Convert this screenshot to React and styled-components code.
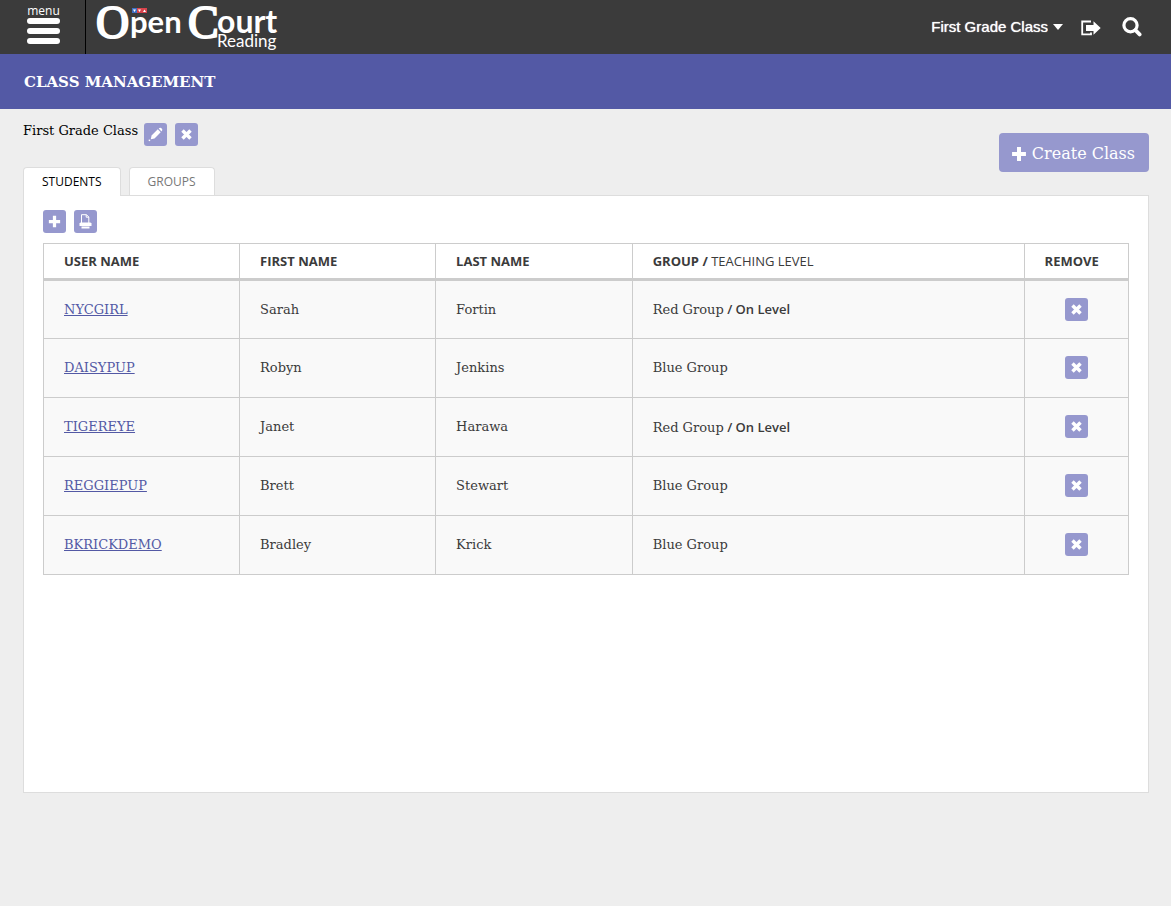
import React from "react";
import styled, { createGlobalStyle } from "styled-components";

const slab = '"DejaVu Serif", "Liberation Serif", serif';
const sans = '"Open Sans", "Noto Sans", sans-serif';

const GlobalStyle = createGlobalStyle`
  *, *::before, *::after { box-sizing: border-box; }
  body {
    margin: 0;
    background: #eeeeee;
    color: #3b3b3b;
    font-family: ${slab};
    font-size: 13px;
    line-height: 20px;
  }
  button, select { font: inherit; margin: 0; }
`;

const TopBar = styled.header`
  display: flex;
  align-items: stretch;
  height: 54px;
  background: #3b3b3b;
  color: #fff;
`;

const MenuButton = styled.button`
  display: flex;
  flex-direction: column;
  align-items: center;
  width: 86px;
  padding: 4px 0 0 2px;
  border: 0;
  border-right: 1px solid #000;
  background: none;
  color: #fff;
  font-family: ${sans};
  font-size: 12px;
  line-height: 14px;
`;

const LogoLink = styled.a`
  display: block;
  margin-left: 8px;
  height: 54px;
`;

const BarTools = styled.div`
  display: flex;
  align-items: center;
  gap: 18px;
  margin-left: auto;
  padding-right: 29px;
`;

const ClassPicker = styled.label`
  display: flex;
  align-items: center;
`;

const ClassSelect = styled.select`
  appearance: none;
  field-sizing: content;
  padding: 0 15px 0 0;
  margin-right: -10px;
  border: 0;
  background: none;
  color: #fff;
  font-family: "Liberation Sans", Arial, sans-serif;
  font-size: 15px;
  line-height: 20px;
  text-shadow: 0 0 1px #fff;
`;

const Caret = styled.svg`
  pointer-events: none;
`;

const PlainButton = styled.button`
  display: flex;
  padding: 0;
  border: 0;
  background: none;
  color: #fff;
`;

const SignOutButton = styled(PlainButton)`
  padding-top: 2px;
  margin-right: 3px;
`;

const TitleBar = styled.div`
  display: flex;
  align-items: center;
  height: 55px;
  padding: 0 24px;
  background: #5359a5;
`;

const Title = styled.h1`
  margin: 0;
  color: #fff;
  font-size: 15px;
  line-height: 20px;
  font-weight: 700;
`;

const Main = styled.main`
  padding: 14px 22px 32px 23px;
`;

const ClassHeader = styled.div`
  display: flex;
  align-items: flex-start;
  height: 44px;
`;

const ClassName = styled.h2`
  margin: -2px 6px 0 0;
  color: #000;
  font-size: 13px;
  line-height: 20px;
  font-weight: 400;
`;

const ButtonGroup = styled.div`
  display: flex;
  gap: 8px;
`;

const IconButton = styled.button`
  display: inline-flex;
  align-items: center;
  justify-content: center;
  width: 23px;
  height: 23px;
  padding: 0;
  border: 0;
  border-radius: 3px;
  background: #9698ce;
  color: #fff;
`;

const CreateButton = styled.button`
  display: flex;
  align-items: center;
  gap: 5px;
  height: 39px;
  margin: 10px 0 0 auto;
  padding: 2px 14px 0 12px;
  border: 0;
  border-radius: 4px;
  background: #9698ce;
  color: #fff;
  font-size: 16px;
  line-height: 20px;
`;

const Tabs = styled.div`
  display: flex;
  align-items: flex-start;
  gap: 8px;
  height: 28px;
`;

const Tab = styled.button`
  position: relative;
  height: ${(p) => (p.$active ? "29px" : "28px")};
  padding: 0 18px;
  border: 1px solid #dddddd;
  border-bottom: 0;
  border-radius: 4px 4px 0 0;
  background: #fff;
  color: ${(p) => (p.$active ? "#000" : "#777")};
  font-family: ${sans};
  font-size: 12px;
  line-height: 20px;
`;

const Panel = styled.section`
  min-height: 598px;
  padding: 14px 19px;
  border: 1px solid #dddddd;
  background: #fff;
`;

const Table = styled.table`
  width: 100%;
  margin-top: 10px;
  border-collapse: collapse;
  table-layout: fixed;
`;

const Col = styled.col`
  width: ${(p) => p.$share}%;
`;

const HeadCell = styled.th`
  height: 36px;
  padding: 0 20px;
  border: 1px solid #cccccc;
  border-bottom-width: 3px;
  text-align: left;
  white-space: nowrap;
  font-family: ${sans};
  font-size: 13px;
  line-height: 20px;
  font-weight: 700;
`;

const Cell = styled.td`
  height: 59px;
  padding: 0 20px;
  border: 1px solid #cccccc;
  background: #f9f9f9;
  text-align: ${(p) => (p.$center ? "center" : "left")};
  vertical-align: middle;
  font-size: 13px;
  line-height: 20px;
`;

const Regular = styled.span`
  font-weight: 400;
`;

const Level = styled.span`
  font-family: ${sans};
  font-size: 13px;
  font-weight: 600;
`;

const UserLink = styled.a`
  color: #5359a5;
  text-decoration: underline;
`;

const Logo = () => (
  <svg width="190" height="54" viewBox="0 0 190 54" role="img" aria-label="Open Court Reading" fill="#fff">
    <text x="2" y="38" fontFamily="Liberation Serif, serif" fontSize="46" stroke="#fff" strokeWidth="2">O</text>
    <text x="36" y="33" fontFamily="Lato, sans-serif" fontSize="31" fontWeight="700">pen</text>
    <text x="94" y="38" fontFamily="Liberation Serif, serif" fontSize="46" stroke="#fff" strokeWidth="2">C</text>
    <text x="123" y="33" fontFamily="Lato, sans-serif" fontSize="32" fontWeight="700">ourt</text>
    <text x="123" y="47" fontFamily="Lato, sans-serif" fontSize="17">Reading</text>
    <rect x="38" y="8" width="5" height="5" fill="#3d6fc4" />
    <rect x="43" y="8" width="5" height="5" fill="#d8434b" />
    <rect x="48" y="8" width="5" height="5" fill="#d8434b" />
    <path d="M39 9.500H42L40.500 12ZM44 9.500H47L45.500 12ZM49 12H52L50.500 9.500Z" />
  </svg>
);

const BarsIcon = () => (
  <svg width="33" height="27" viewBox="0 0 33 27" fill="#fff" aria-hidden="true">
    <rect width="33" height="6" rx="3" />
    <rect y="10" width="33" height="6" rx="3" />
    <rect y="20" width="33" height="6" rx="3" />
  </svg>
);

const CrossIcon = () => (
  <svg width="13" height="13" viewBox="0 0 12 12" aria-hidden="true">
    <path d="M2.300 2.300 9.700 9.700M9.700 2.300 2.300 9.700" stroke="#fff" strokeWidth="3.200" />
  </svg>
);

const PlusIcon = ({ size = 13 }) => (
  <svg width={size} height={size} viewBox="0 0 12 12" aria-hidden="true">
    <path d="M6 .8V11.200M.8 6H11.200" stroke="#fff" strokeWidth="3" />
  </svg>
);

const PencilIcon = () => (
  <svg width="15" height="15" viewBox="0 0 15 15" fill="#fff" aria-hidden="true">
    <path d="M10.700 1.500 11.500 .9Q12.400 .3 13.200 1.100L14 1.900Q14.700 2.700 14.100 3.600L13.500 4.400Z" />
    <path d="M9.800 2.300 12.700 5.200 6.500 11.400 2.800 12.300 3.600 8.500Z" />
    <path d="M.7 12.600H2.200V14.100H.7Z" />
  </svg>
);

const PrinterIcon = () => (
  <svg width="13" height="15" viewBox="0 0 13 15" aria-hidden="true">
    <path d="M2.500 9V.7H7.500L9.800 3V9" fill="none" stroke="#fff" strokeWidth="1" />
    <path d="M7.200 .7V3.200H9.800" fill="none" stroke="#fff" strokeWidth="1" />
    <path d="M1.500 8.500H11.500L12.500 9.500V12H.5V9.500Z" fill="#fff" />
    <path d="M2.500 12.500H10.500V14.500H2.500Z" fill="#fff" />
  </svg>
);

const ExitIcon = () => (
  <svg width="20" height="16" viewBox="0 0 20 16" aria-hidden="true">
    <path d="M10 1.500H1.200V14.300H10V12.500" fill="none" stroke="#fff" strokeWidth="1.800" />
    <path d="M5 5H12.500V1.300L19.700 8 12.500 14.700V11H5Z" fill="#fff" />
  </svg>
);

const SearchIcon = () => (
  <svg width="20" height="20" viewBox="0 0 20 20" fill="none" stroke="#fff" aria-hidden="true">
    <circle cx="8.500" cy="8.200" r="6.600" strokeWidth="3.200" />
    <path d="M13.400 13.200 17.600 17.400" strokeWidth="3.800" strokeLinecap="round" />
  </svg>
);

const students = [
  { user: "NYCGIRL", first: "Sarah", last: "Fortin", group: "Red Group", level: "On Level" },
  { user: "DAISYPUP", first: "Robyn", last: "Jenkins", group: "Blue Group" },
  { user: "TIGEREYE", first: "Janet", last: "Harawa", group: "Red Group", level: "On Level" },
  { user: "REGGIEPUP", first: "Brett", last: "Stewart", group: "Blue Group" },
  { user: "BKRICKDEMO", first: "Bradley", last: "Krick", group: "Blue Group" },
];

export default function App() {
  return (
    <>
      <GlobalStyle />
      <TopBar>
        <MenuButton type="button">
          menu
          <BarsIcon />
        </MenuButton>
        <LogoLink href="#home">
          <Logo />
        </LogoLink>
        <BarTools>
          <ClassPicker>
            <ClassSelect aria-label="Class" defaultValue="first">
              <option value="first">First Grade Class</option>
            </ClassSelect>
            <Caret width="10" height="6" viewBox="0 0 10 6" aria-hidden="true">
              <path d="M0 0H10L5 6Z" fill="#fff" />
            </Caret>
          </ClassPicker>
          <SignOutButton type="button" aria-label="Sign out">
            <ExitIcon />
          </SignOutButton>
          <PlainButton type="button" aria-label="Search">
            <SearchIcon />
          </PlainButton>
        </BarTools>
      </TopBar>
      <TitleBar>
        <Title>CLASS MANAGEMENT</Title>
      </TitleBar>
      <Main>
        <ClassHeader>
          <ClassName>First Grade Class</ClassName>
          <ButtonGroup>
            <IconButton type="button" aria-label="Edit class">
              <PencilIcon />
            </IconButton>
            <IconButton type="button" aria-label="Delete class">
              <CrossIcon />
            </IconButton>
          </ButtonGroup>
          <CreateButton type="button">
            <PlusIcon size={16} />
            Create Class
          </CreateButton>
        </ClassHeader>
        <Tabs role="tablist">
          <Tab type="button" role="tab" aria-selected="true" $active>
            STUDENTS
          </Tab>
          <Tab type="button" role="tab" aria-selected="false">
            GROUPS
          </Tab>
        </Tabs>
        <Panel>
          <ButtonGroup>
            <IconButton type="button" aria-label="Add student">
              <PlusIcon />
            </IconButton>
            <IconButton type="button" aria-label="Print">
              <PrinterIcon />
            </IconButton>
          </ButtonGroup>
          <Table>
            <colgroup>
              <Col $share={18.07} />
              <Col $share={18.07} />
              <Col $share={18.12} />
              <Col $share={36.12} />
              <Col $share={9.62} />
            </colgroup>
            <thead>
              <tr>
                <HeadCell>USER NAME</HeadCell>
                <HeadCell>FIRST NAME</HeadCell>
                <HeadCell>LAST NAME</HeadCell>
                <HeadCell>
                  GROUP / <Regular>TEACHING LEVEL</Regular>
                </HeadCell>
                <HeadCell>REMOVE</HeadCell>
              </tr>
            </thead>
            <tbody>
              {students.map((s) => (
                <tr key={s.user}>
                  <Cell>
                    <UserLink href={`#${s.user}`}>{s.user}</UserLink>
                  </Cell>
                  <Cell>{s.first}</Cell>
                  <Cell>{s.last}</Cell>
                  <Cell>
                    {s.group}
                    {s.level && <Level> / {s.level}</Level>}
                  </Cell>
                  <Cell $center>
                    <IconButton type="button" aria-label={`Remove ${s.user}`}>
                      <CrossIcon />
                    </IconButton>
                  </Cell>
                </tr>
              ))}
            </tbody>
          </Table>
        </Panel>
      </Main>
    </>
  );
}
